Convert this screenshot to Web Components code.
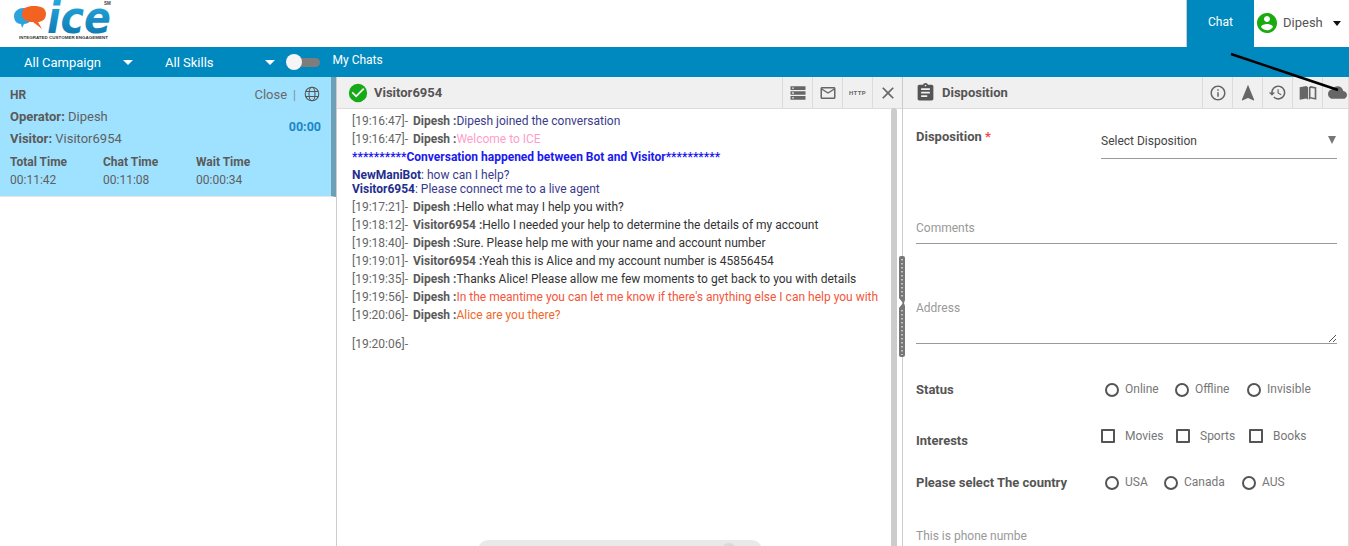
<!DOCTYPE html>
<html>
<head>
<meta charset="utf-8">
<title>ICE Chat</title>
<style>
  html, body { margin: 0; height: 546px; overflow: hidden; background: #fff; }
  body { font-family: Roboto, "Liberation Sans", sans-serif; font-size: 12px; color: #666; }
</style>
</head>
<body>
<ice-app></ice-app>

<script>
const ICONS = {
  check: 'M12 2a10 10 0 100 20 10 10 0 000-20zm-2 15l-5-5 1.41-1.41L10 14.17l7.59-7.59L19 8l-9 9z',
  mail: 'M20 4H4c-1.1 0-2 .9-2 2v12c0 1.1.9 2 2 2h16c1.1 0 2-.9 2-2V6c0-1.1-.9-2-2-2zm0 14H4V8l8 5 8-5v10zm-8-7L4 6h16l-8 5z',
  close: 'M19 6.41L17.59 5 12 10.59 6.41 5 5 6.41 10.59 12 5 17.59 6.41 19 12 13.41 17.59 19 19 17.59 13.41 12z',
  clipboard: 'M19 3h-4.18C14.4 1.84 13.3 1 12 1c-1.3 0-2.4.84-2.82 2H5c-1.1 0-2 .9-2 2v14c0 1.1.9 2 2 2h14c1.1 0 2-.9 2-2V5c0-1.1-.9-2-2-2zm-7 0c.55 0 1 .45 1 1s-.45 1-1 1-1-.45-1-1 .45-1 1-1zm2 14H7v-2h7v2zm3-4H7v-2h10v2zm0-4H7V7h10v2z',
  info: 'M11 7h2v2h-2zm0 4h2v6h-2zm1-9C6.48 2 2 6.48 2 12s4.48 10 10 10 10-4.48 10-10S17.52 2 12 2zm0 18c-4.41 0-8-3.59-8-8s3.59-8 8-8 8 3.59 8 8-3.59 8-8 8z',
  nav: 'M12 2L4.5 20.29l.71.71L12 18l6.79 3 .71-.71z',
  history: 'M13 3c-4.97 0-9 4.03-9 9H1l3.89 3.89.07.14L9 12H6c0-3.87 3.13-7 7-7s7 3.13 7 7-3.13 7-7 7c-1.93 0-3.68-.79-4.94-2.06l-1.42 1.42C8.27 19.99 10.51 21 13 21c4.97 0 9-4.03 9-9s-4.03-9-9-9zm-1 5v5l4.28 2.54.72-1.21-3.5-2.08V8H12z',
  cloud: 'M19.35 10.04C18.67 6.59 15.64 4 12 4 9.11 4 6.6 5.64 5.35 8.04 2.34 8.36 0 10.91 0 14c0 3.31 2.69 6 6 6h13c2.76 0 5-2.24 5-5 0-2.64-2.05-4.78-4.65-4.96z',
  account: 'M12 2C6.48 2 2 6.48 2 12s4.48 10 10 10 10-4.48 10-10S17.52 2 12 2zm0 3c1.66 0 3 1.34 3 3s-1.34 3-3 3-3-1.34-3-3 1.34-3 3-3zm0 14.2c-2.5 0-4.71-1.28-6-3.22.03-1.99 4-3.08 6-3.08 1.99 0 5.97 1.09 6 3.08-1.29 1.94-3.5 3.22-6 3.22z',
  book: 'M2 5l8-1.5 2 1.5v15l-2-1.5L2 20zM13 5l2-1.5 7 1.5v15l-7-1.5-2 1.5zm2 .9v11l5 1V6.7z',
  list: 'M3 4h18v4.4H3zM3 9.8h18v4.4H3zM3 15.6h18V20H3zM5 5.4v1.6h2V5.4zM5 11.2v1.6h2v-1.6zM5 17v1.6h2V17z'
};
const icon = (name, size, color) =>
  `<svg width="${size}" height="${size}" viewBox="0 0 24 24" fill="${color}" fill-rule="evenodd"><path d="${ICONS[name]}"/></svg>`;

// logo + chat tab + user
class IceHeader extends HTMLElement {
  constructor() {
    super();
    this.attachShadow({ mode: 'open' }).innerHTML = `
      <style>
        :host { display: flex; height: 47px; background: #fff; align-items: stretch; }
        .logo { display: block; margin-left: 12px; }
        .tab {
          margin-left: auto; width: 68px; background: #0089bf; color: #fff; font-size: 12px; font-weight: 400;
          display: flex; justify-content: center; padding-top: 15px; box-sizing: border-box;
          border-left: 1px solid #ccc;
        }
        .user { width: 95px; display: flex; align-items: flex-start; padding: 12px 0 0 1px; box-sizing: border-box; color: #555; font-size: 13px; }
        .user svg { margin-top: -1px; }
        .user span { margin: 3px 0 0 4px; }
        .caret { width: 0; height: 0; border: 4px solid transparent; border-top: 5px solid #111; border-bottom: 0; margin: 9px 0 0 10px; }
      </style>
      <svg class="logo" width="104" height="44" viewBox="0 0 104 44">
        <defs>
          <linearGradient id="g" x1="0" y1="0" x2="0" y2="1">
            <stop offset="0" stop-color="#29b4e8"/><stop offset="1" stop-color="#0a6fa8"/>
          </linearGradient>
        </defs>
        <path d="M2 16c0-5 5-8 9-8s9 3 9 8-4 8-8 8l-2 4-1-4c-4 0-7-3-7-8z" fill="#2ba3dc"/>
        <path d="M10 14c0-6 5-8 12-8s12 2 12 8-5 8-8 8l4 7-9-7c-6 0-11-2-11-8z" fill="#f26322"/>
        <text transform="translate(35 33) scale(.9 1)" font-family="DejaVu Sans" font-weight="700" font-style="italic" font-size="44" fill="url(#g)">ice</text>
        <text x="92" y="5" font-family="Liberation Sans" font-weight="700" font-size="4.5" fill="#444">SM</text>
        <text x="7" y="38.5" font-family="Liberation Sans" font-weight="700" font-size="4.4" fill="#333" textLength="89" lengthAdjust="spacingAndGlyphs">INTEGRATED CUSTOMER ENGAGEMENT</text>
      </svg>
      <div class="tab">Chat</div>
      <div class="user">${icon('account', 24, '#1aab0e')}<span>Dipesh</span><i class="caret"></i></div>
    `;
  }
}

class IceNav extends HTMLElement {
  constructor() {
    super();
    this.attachShadow({ mode: 'open' }).innerHTML = `
      <style>
        :host { display: flex; height: 30px; background: #0089bf; color: #fff; align-items: center; padding-left: 24px; font-size: 13px; }
        .caret { width: 0; height: 0; border: 5px solid transparent; border-top: 5px solid #fff; border-bottom: 0; }
        .c1 { margin: 0 32px 0 22px; }
        .c2 { margin: 0 0 0 51px; }
        .toggle { position: relative; width: 32px; height: 9px; background: #7d7d7d; border-radius: 5px; margin: 0 13px 0 13px; }
        .toggle::before { content: ''; position: absolute; left: -2px; top: -3.5px; width: 16px; height: 16px; border-radius: 50%; background: #f5f5f5; }
        .my { font-size: 12px; font-weight: 400; margin-top: -4px; }
      </style>
      <span>All Campaign</span><i class="caret c1"></i>
      <span>All Skills</span><i class="caret c2"></i>
      <i class="toggle"></i><span class="my">My Chats</span>
    `;
  }
}

class ChatCard extends HTMLElement {
  constructor() {
    super();
    this.attachShadow({ mode: 'open' }).innerHTML = `
      <style>
        :host { display: block; height: 120px; box-sizing: border-box; background: #9fe2ff; border-right: 5px solid #6f9fb5; border-bottom: 1px solid #e6e6e6; padding: 11px 10px 0; color: #5f5f5f; line-height: 14px; position: relative; }
        b { font-weight: 700; color: #5a5a5a; }
        .top { display: flex; align-items: center; height: 14px; }
        .close { margin-left: auto; font-size: 13px; color: #6a6a6a; }
        .sep { margin: 0 8px 0 6px; color: #888; }
        .top svg { margin-right: 1px; margin-top: -2px; }
        .row { margin-top: 8px; font-size: 13px; }
        .row + .row { margin-top: 8px; }
        .timer { position: absolute; right: 10px; top: 43px; font-weight: 700; color: #1b86c4; font-size: 12.5px; }
        .times { display: grid; grid-template-columns: 93px 93px 1fr; margin-top: 7px; line-height: 18px; }
      </style>
      <div class="top"><b>HR</b><span class="close">Close</span><span class="sep">|</span>
        <svg width="16" height="16" viewBox="0 0 16 16" fill="none" stroke="#555" stroke-width="1.1"><circle cx="8" cy="8" r="6.8"/><ellipse cx="8" cy="8" rx="3" ry="6.8"/><path d="M1.6 5.5h12.8M1.6 10.5h12.8"/></svg>
      </div>
      <div class="row"><b>Operator:</b> Dipesh</div>
      <div class="row"><b>Visitor:</b> Visitor6954</div>
      <div class="timer">00:00</div>
      <div class="times">
        <b>Total Time</b><b>Chat Time</b><b>Wait Time</b>
        <span>00:11:42</span><span>00:11:08</span><span>00:00:34</span>
      </div>
    `;
  }
}

// shared panel title bar, icons come in through the slot
class PanelBar extends HTMLElement {
  constructor() {
    super();
    this.attachShadow({ mode: 'open' }).innerHTML = `
      <style>
        :host { display: flex; align-items: center; height: 32px; box-sizing: border-box; background: #f0f0f0; border-bottom: 1px solid #dcdcdc; font-weight: 700; font-size: 13px; color: #555; flex: none; }
        .title { display: flex; align-items: center; gap: 6px; padding-left: var(--title-pad, 12px); }
        .tools { margin-left: auto; display: flex; height: 100%; margin-right: var(--tools-shift, 0); }
        ::slotted([slot="icon"]) { display: flex; }
        ::slotted(span:not([slot])) { width: 30px; display: flex; align-items: center; justify-content: center; border-left: 1px solid #dcdcdc; box-sizing: border-box; }
      </style>
      <div class="title"><slot name="icon"></slot><slot name="title"></slot></div>
      <div class="tools"><slot></slot></div>
    `;
  }
}

class ChatLine extends HTMLElement {
  constructor() {
    super();
    const who = this.getAttribute('who');
    const time = this.getAttribute('time');
    this.attachShadow({ mode: 'open' }).innerHTML = `
      <style>
        :host { display: block; height: 18px; line-height: 18px; white-space: nowrap; color: #333; }
        .t { color: #666; }
        b { color: #5a5a5a; margin-left: 2px; font-weight: 700; }
      </style>
      <span class="t">[${time}]-</span>${who ? ` <b>${who} :</b>` : ''}<slot></slot>
    `;
  }
}

class ChatPanel extends HTMLElement {
  constructor() {
    super();
    this.attachShadow({ mode: 'open' }).innerHTML = `
      <style>
        :host { display: flex; flex-direction: column; position: relative; min-height: 0; overflow: hidden; border-left: 1px solid #ccc; }
        panel-bar { --title-pad: 10px; }
        .log { padding: 3px 0 0 15px; font-size: 12px; }
        .banner { height: 18px; line-height: 18px; color: #1a1aee; font-weight: 700; white-space: nowrap; }
        .bot { height: 14px; line-height: 14px; color: #3a3a8c; white-space: nowrap; }
        .bot b { color: #1f2f8f; }
        .gap { height: 11px; }
        .bots { padding: 2px 0; }
        .scroll { position: absolute; left: 554px; top: 31px; bottom: 0; width: 6px; background: #ccc; border-radius: 3px 3px 0 0; }
        .pill { position: absolute; left: 141px; bottom: -14px; width: 284px; height: 20px; background: #e9e9e9; border-radius: 10px; }
        .pill::after { content: ''; position: absolute; right: 26px; top: 3px; width: 14px; height: 14px; border-radius: 50%; background: #d9d9d9; }
      </style>
      <panel-bar>
        <span slot="icon" style="margin-right:-1px">${icon('check', 22, '#17a917')}</span>
        <span slot="title">Visitor6954</span>
        <span>${icon('list', 20, '#666')}</span>
        <span>${icon('mail', 18, '#666')}</span>
        <span style="font-size:6px;color:#666;letter-spacing:.4px">HTTP</span>
        <span>${icon('close', 20, '#666')}</span>
      </panel-bar>
      <div class="log">
        <chat-line time="19:16:47" who="Dipesh" style="color:#3a3a8c">Dipesh joined the conversation</chat-line>
        <chat-line time="19:16:47" who="Dipesh" style="color:#ff9dcb">Welcome to ICE</chat-line>
        <div class="banner">**********Conversation happened between Bot and Visitor**********</div>
        <div class="bots">
          <div class="bot"><b>NewManiBot</b>: how can I help?</div>
          <div class="bot"><b>Visitor6954</b>: Please connect me to a live agent</div>
        </div>
        <chat-line time="19:17:21" who="Dipesh">Hello what may I help you with?</chat-line>
        <chat-line time="19:18:12" who="Visitor6954">Hello I needed your help to determine the details of my account</chat-line>
        <chat-line time="19:18:40" who="Dipesh">Sure. Please help me with your name and account number</chat-line>
        <chat-line time="19:19:01" who="Visitor6954">Yeah this is Alice and my account number is 45856454</chat-line>
        <chat-line time="19:19:35" who="Dipesh">Thanks Alice! Please allow me few moments to get back to you with details</chat-line>
        <chat-line time="19:19:56" who="Dipesh" style="color:#f4563a">In the meantime you can let me know if there's anything else I can help you with</chat-line>
        <chat-line time="19:20:06" who="Dipesh" style="color:#ef6a2a">Alice are you there?</chat-line>
        <div class="gap"></div>
        <chat-line time="19:20:06"></chat-line>
      </div>
      <div class="scroll"></div>
      <div class="pill"></div>
    `;
  }
}

// two column form row: label on the left, control on the right
class FormRow extends HTMLElement {
  constructor() {
    super();
    this.attachShadow({ mode: 'open' }).innerHTML = `
      <style>
        :host { display: grid; grid-template-columns: 185px 1fr; align-items: center; font-weight: 400; }
        .l { font-weight: 700; color: #555; font-size: 13px; }
      </style>
      <div class="l"><slot name="label"></slot></div>
      <div><slot></slot></div>
    `;
  }
}

class OptionGroup extends HTMLElement {
  constructor() {
    super();
    this.attachShadow({ mode: 'open' });
  }
  connectedCallback() {
    const box = this.getAttribute('type') === 'check';
    const items = this.getAttribute('items').split(',');
    this.shadowRoot.innerHTML = `
      <style>
        :host { display: flex; color: #777; font-size: 12px; }
        .o { display: flex; align-items: flex-start; }
        i { display: block; box-sizing: border-box; border: 2px solid #555; margin-top: 2px; }
        .r { width: 14px; height: 14px; border-radius: 50%; margin-right: 6px; }
        .r + span { margin-top: 1px; }
        .c { width: 14px; height: 14px; border-radius: 1px; margin-right: 10px; margin-top: 0; }
      </style>
      ${items.map(s => {
        const [label, w] = s.split(':');
        return `<div class="o" style="width:${w}px"><i class="${box ? 'c' : 'r'}"></i><span>${label}</span></div>`;
      }).join('')}
    `;
  }
}

class DispositionPanel extends HTMLElement {
  constructor() {
    super();
    this.attachShadow({ mode: 'open' }).innerHTML = `
      <style>
        :host { display: flex; flex-direction: column; min-height: 0; overflow: hidden; border-left: 1px solid #ccc; border-right: 1px solid #ddd; position: relative; }
        panel-bar { --tools-shift: -4px; }
        .form { padding: 0 11px 0 13px; display: flex; flex-direction: column; color: #999; }
        .sel { display: flex; justify-content: space-between; align-items: flex-start; color: #444; font-size: 12px; line-height: 18px; box-sizing: border-box; height: 27px; margin-top: 3px; padding-right: 1px; border-bottom: 1px solid #9a9a9a; }
        .arrow { width: 0; height: 0; border: 4px solid transparent; border-top: 8px solid #777; border-bottom: 0; margin-top: 4px; }
        .req { color: #f44; }
        .field { border-bottom: 1px solid #9a9a9a; position: relative; padding-top: 1px; }
        .grip { position: absolute; right: 0; bottom: 0; }
        form-row.d { margin-top: 20px; align-items: start; }
      </style>
      <panel-bar>
        <span slot="icon">${icon('clipboard', 21, '#555')}</span>
        <span slot="title">Disposition</span>
        <span>${icon('info', 18, '#666')}</span>
        <span>${icon('nav', 20, '#666')}</span>
        <span>${icon('history', 19, '#666')}</span>
        <span>${icon('book', 20, '#666')}</span>
        <span>${icon('cloud', 19, '#666')}</span>
      </panel-bar>
      <div class="form">
        <form-row class="d" style="height:49px">
          <span slot="label">Disposition <span class="req">*</span></span>
          <div class="sel"><span>Select Disposition</span><i class="arrow"></i></div>
        </form-row>
        <div class="field" style="margin-top:42px;height:22px">Comments</div>
        <div class="field" style="margin-top:56px;height:42px">Address
          <svg class="grip" width="9" height="9" viewBox="0 0 9 9" stroke="#555" fill="none"><path d="M1 8l7-7M5 8l3-3"/></svg>
        </div>
        <form-row style="margin-top:36px;height:18px">
          <span slot="label">Status</span>
          <option-group items="Online:70,Offline:72,Invisible:80" style="margin-left:4px"></option-group>
        </form-row>
        <form-row style="margin-top:33px;height:18px">
          <span slot="label">Interests</span>
          <option-group type="check" items="Movies:75,Sports:73,Books:70" style="margin-top:-8px"></option-group>
        </form-row>
        <form-row style="margin-top:24px;height:18px">
          <span slot="label">Please select The country</span>
          <option-group items="USA:59,Canada:78,AUS:60" style="margin-left:4px"></option-group>
        </form-row>
        <div style="margin-top:38px">This is phone numbe</div>
      </div>
    `;
  }
}

class IceApp extends HTMLElement {
  constructor() {
    super();
    this.attachShadow({ mode: 'open' }).innerHTML = `
      <style>
        :host { display: flex; flex-direction: column; height: 546px; position: relative; overflow: hidden; }
        .main { flex: 1; min-height: 0; display: grid; grid-template-columns: 336px 566px 447px; }
        .left { background: #fff; }
        .arrow { position: absolute; left: 1228px; top: 50px; pointer-events: none; }
        .handle { position: absolute; left: 899px; top: 256px; }
      </style>
      <ice-header></ice-header>
      <ice-nav></ice-nav>
      <div class="main">
        <div class="left"><chat-card></chat-card></div>
        <chat-panel></chat-panel>
        <disposition-panel></disposition-panel>
      </div>
      <svg class="handle" width="7" height="101" viewBox="0 0 7 101">
        <path d="M0 2a2 2 0 012-2h2a2 2 0 012 2v42l-1 3 1 3v49a2 2 0 01-2 2H2a2 2 0 01-2-2V52l4-5-4-5z" fill="#777"/>
        <path d="M3 3v38M3 54v45" stroke="#ddd" stroke-width="1.5" stroke-dasharray="1.5 2.5"/>
      </svg>
      <svg class="arrow" width="121" height="46" viewBox="0 0 121 46"><path d="M3 4L110 40" stroke="#000" stroke-width="2.5"/></svg>
    `;
  }
}

customElements.define('panel-bar', PanelBar);
customElements.define('chat-line', ChatLine);
customElements.define('form-row', FormRow);
customElements.define('option-group', OptionGroup);
customElements.define('ice-header', IceHeader);
customElements.define('ice-nav', IceNav);
customElements.define('chat-card', ChatCard);
customElements.define('chat-panel', ChatPanel);
customElements.define('disposition-panel', DispositionPanel);
customElements.define('ice-app', IceApp);
</script>
</body>
</html>
